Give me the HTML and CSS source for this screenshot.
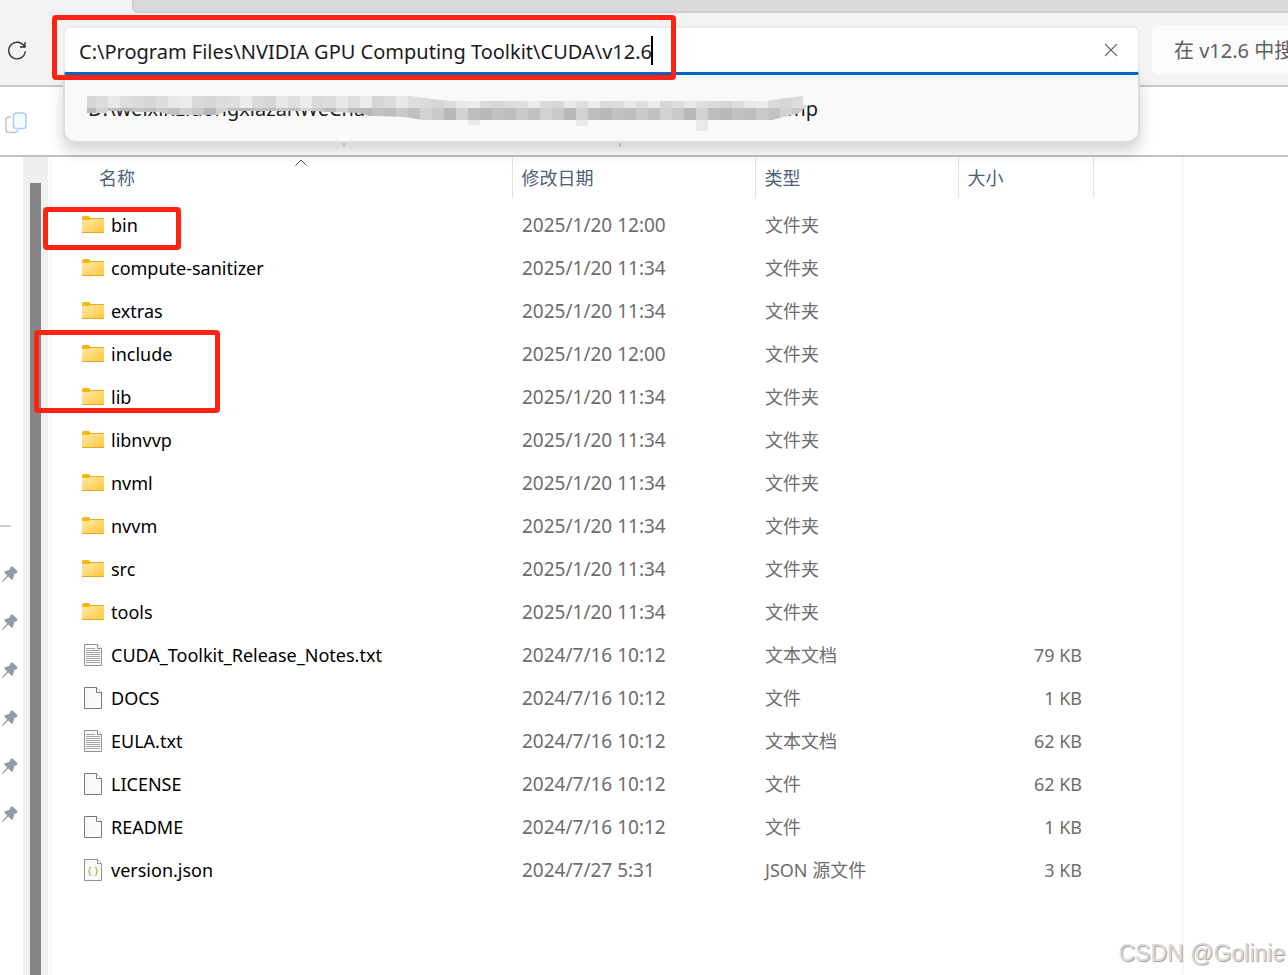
FILE: index.html
```
<!DOCTYPE html>
<html lang="zh-CN">
<head>
<meta charset="utf-8">
<title>v12.6</title>
<link rel="stylesheet" href="styles.css">
</head>
<body>
<svg class="defs" aria-hidden="true">
  <defs>
    <linearGradient id="fold" x1="0" y1="0" x2="1" y2="1"><stop offset="0" stop-color="#ffe8a6"/><stop offset="1" stop-color="#ffc83c"/></linearGradient>
    <symbol id="folder" viewBox="0 0 22 18"><path d="M0 1.5Q0 0 1.500 0H7L8.500 2H22V17H0Z" fill="#fbb615"/><path d="M0 4H7L8.500 3H22V17H0Z" fill="url(#fold)"/><path d="M8.500 2H22V3H8Z" fill="#e9ad27"/><path d="M0 16H22V17H0Z" fill="#e5a82c"/></symbol>
    <symbol id="doc" viewBox="0 0 18 22"><path d="M.5.5H12.500L17.500 5.500V21.500H.5Z" fill="#fafafa" stroke="#787878"/><path d="M12.500.5V5.500H17.500" fill="#fff" stroke="#787878"/></symbol>
    <symbol id="txt" viewBox="0 0 18 22"><path d="M.5.5H13.500L17.500 4.500V21.500H.5Z" fill="#fafafa" stroke="#929292"/><path d="M13.500.5V4.500H17.500" fill="#fff" stroke="#929292"/><path d="M2 4.500H11M2 6.500H16M2 8.500H16M2 10.500H16M2 12.500H16M2 14.500H16M2 16.500H16M2 18.500H16" stroke="#a5a5a5"/></symbol>
    <symbol id="json" viewBox="0 0 18 22"><path d="M.5.5H13.500L17.500 4.500V21.500H.5Z" fill="#fafafa" stroke="#929292"/><path d="M13.500.5V4.500H17.500" fill="#fff" stroke="#929292"/><path d="M7.500 8.500H6.500Q5.500 8.500 5.500 10V11.500L4.500 12.500L5.500 13.500V15Q5.500 16.500 6.500 16.500H7.500M10.500 8.500H11.500Q12.500 8.500 12.500 10V11.500L13.500 12.500L12.500 13.500V15Q12.500 16.500 11.500 16.500H10.500" fill="none" stroke="#bfb94e" stroke-width="1.200"/></symbol>
    <symbol id="pin" viewBox="0 0 16 16"><path d="M9 .8Q10 0 11 .7L15.200 5Q16 6 15 6.700L12.200 8.200L11 13Q10.500 14.300 9.500 13.500L6.200 10.500L1.500 15.500L.3 15.700L.5 14.500L5.300 9.700L2.500 6.700Q1.800 5.600 3 5.200L7.500 3.800Z" fill="#919ca4"/></symbol>
  </defs>
</svg>

<header class="top">
  <div class="tabs"><div class="tabstrip"></div></div>
  <div class="nav">
    <button class="icon-btn refresh" aria-label="刷新"><svg width="20" height="20" viewBox="0 0 20 20" fill="none" stroke="#333" stroke-width="1.400"><path d="M17.300 5.500A8.300 8.300 0 1 0 18.300 10.200M18 1V6H13"/></svg></button>
    <div class="address">
      <input class="path" aria-label="地址" value="C:\Program Files\NVIDIA GPU Computing Toolkit\CUDA\v12.6">
      <span class="caret"></span>
      <button class="icon-btn clear" aria-label="清除"><svg width="14" height="14" viewBox="0 0 14 14" stroke="#666" stroke-width="1.100"><path d="M1 1L13 13M13 1L1 13"/></svg></button>
      <div class="suggest">
        <span>D:\weixinzidongxiazai\WeChat</span><span>mp</span>
        <svg class="mosaic" width="740" height="36" viewBox="0 0 740 36" aria-hidden="true">
          <clipPath id="smear"><path d="M0 0H323L345 3L363 5H680L692 3L716 0V9H722L712 17L685 24H335L318 21L290 20H282L273 17L240 16L228 15H140L130 19H84L72 16H50L36 15H20V17H0Z"/></clipPath>
          <g id="mosaic" clip-path="url(#smear)"></g>
          <path d="M381 24H393V29H381ZM489 24H501V30H489ZM609 24H621V35H609Z" fill="#e9e9e9"/>
        </svg>
      </div>
      <div class="mark mark-path"></div>
    </div>
    <input class="search" aria-label="搜索" placeholder="在 v12.6 中搜索">
  </div>
</header>

<div class="toolbar">
  <button class="icon-btn copy" aria-label="复制"><svg width="22" height="22" viewBox="0 0 22 22" fill="none"><path d="M6 5H4Q1 5 1 8V17Q1 20.500 4 20.500H9Q12 20.500 13 18" stroke="#c4c4c4" stroke-width="1.500"/><rect x="8.500" y="1" width="12.500" height="15.500" rx="3" fill="#f6fbff" stroke="#a5cff0" stroke-width="1.500"/></svg></button>
  <span class="sep"></span><span class="sep"></span>
</div>

<div class="content">
  <nav class="side" aria-label="快速访问">
    <span class="rule"></span>
    <svg class="pin"><use href="#pin"/></svg><svg class="pin"><use href="#pin"/></svg><svg class="pin"><use href="#pin"/></svg><svg class="pin"><use href="#pin"/></svg><svg class="pin"><use href="#pin"/></svg><svg class="pin"><use href="#pin"/></svg>
  </nav>
  <div class="track"><div class="thumb"></div></div>
  <main class="files">
    <table>
      <colgroup><col class="c-name"><col class="c-date"><col class="c-type"><col class="c-size"></colgroup>
      <thead><tr>
        <th><button class="sort name">名称<svg class="chev" width="12" height="7" viewBox="0 0 12 7" fill="none" stroke="#555"><path d="M.5 6.500L6 1L11.500 6.500"/></svg></button></th>
        <th><button class="sort">修改日期</button></th><th><button class="sort">类型</button></th><th><button class="sort">大小</button></th>
      </tr></thead>
      <tbody id="rows"></tbody>
    </table>
    <div class="mark mark-bin"></div>
    <div class="mark mark-lib"></div>
  </main>
  <aside class="preview"></aside>
</div>
<div class="watermark">CSDN @Golinie</div>
<script src="app.js"></script>
</body>
</html>
```
FILE: styles.css
```
* { box-sizing: border-box; }
body {
  margin: 0;
  min-height: 100vh;
  display: flex;
  flex-direction: column;
  overflow: hidden;
  position: relative;
  background: #fff;
  color: #000;
  font: 18px/24px "Noto Sans", "Noto Sans CJK SC", sans-serif;
}
button, input { font: inherit; color: inherit; border: 0; background: none; padding: 0; outline: 0; }
svg { display: block; }
.defs { position: absolute; width: 0; height: 0; }
.top { background: #f3f3f3; border-bottom: 2px solid #c8c8c8; }
.tabs { padding-left: 132px; }
.tabstrip { height: 13px; background: #dadada; border: 2px solid #cdcdcd; border-width: 0 0 2px 2px; border-bottom-left-radius: 6px; }
.nav { display: flex; height: 72px; padding: 12px 0 10px 7px; }
.refresh { width: 22px; margin-right: 34px; padding-top: 1px; }
.address {
  position: relative;
  z-index: 3;
  flex: 1;
  display: flex;
  align-items: center;
  height: 49px;
  margin-top: 1px;
  padding: 0 22px 0 14px;
  background: #fff;
  border: 2px solid #ebebeb;
  border-bottom: 3px solid #0067c0;
  border-radius: 7px 7px 4px 4px;
}
.path { width: 572px; height: 30px; padding-top: 2px; font-size: 20px; color: #1b1b1b; }
.caret { width: 2px; height: 29px; background: #000; }
.clear { margin-left: auto; margin-right: -2px; }
.suggest {
  position: absolute;
  top: 100%;
  left: -2px;
  right: -2px;
  margin-top: 3px;
  height: 68px;
  display: flex;
  align-items: center;
  padding: 2px 320px 0 23px;
  justify-content: space-between;
  font-size: 20px;
  color: #1b1b1b;
  background: #f9f9f9;
  border: 2px solid #dcdcdc;
  border-top: 0;
  border-radius: 0 0 12px 12px;
  box-shadow: 0 8px 16px rgba(0, 0, 0, .18);
}
.mosaic { position: absolute; left: 22px; top: 21px; }
.search { width: 136px; height: 49px; margin-left: 12px; padding: 2px 0 0 22px; font-size: 20px; background: #fbfbfb; border-radius: 7px 0 0 7px; }
.search::placeholder { color: #606060; opacity: 1; }
.mark { position: absolute; z-index: 4; border: 5px solid #ff2314; border-radius: 4px; pointer-events: none; }
.mark-path { left: -13px; top: -13px; width: 624px; height: 65px; }
.toolbar { display: flex; align-items: center; height: 70px; padding-left: 5px; border-bottom: 2px solid #c1c1c1; }
.copy { padding-top: 4px; }
.sep { width: 2px; height: 36px; margin: 16px 0 0 316px; background: #d8d8d8; }
.sep + .sep { margin-left: 274px; }
.content { flex: 1; display: flex; }
.side { width: 23px; }
.rule { display: block; height: 2px; width: 11px; margin: 368px 0 39px; background: #d0d0d0; }
.pin { width: 16px; height: 16px; margin: 0 0 32px 2px; }
.track { width: 25px; padding: 26px 7px 0; background: #efefef; display: flex; }
.thumb { flex: 1; background: #858585; }
.files { position: relative; flex: 1; margin-left: 2px; border: 2px solid #f7f7f7; border-width: 0 2px; }
.preview { width: 104px; }
table { table-layout: fixed; width: 1041px; border-collapse: collapse; }
.c-name { width: 460px; }
.c-date { width: 243px; }
.c-type { width: 203px; }
.c-size { width: 135px; }
th { height: 41px; padding: 0; border-right: 1px solid #e2e2e2; font-weight: 400; color: #4c607a; }
.sort { display: block; width: 100%; height: 40px; padding-left: 9px; text-align: left; }
.name { position: relative; width: auto; min-width: 421px; margin-left: 38px; }
.chev { position: absolute; top: 1px; left: 50%; margin-left: -6px; }
tbody::before { content: ""; display: block; height: 5px; }
td { height: 43px; padding: 0 0 0 10px; color: #6d6d6d; }
td:first-child { padding-left: 30px; color: #000; }
td:nth-child(2) { font-size: 19px; }
td:last-child { padding: 0 11px 0 0; text-align: right; }
.file { display: flex; align-items: center; gap: 7px; }
.ico { width: 22px; height: 22px; }
.mark-bin { left: -9px; top: 50px; width: 138px; height: 43px; }
.mark-lib { left: -18px; top: 173px; width: 186px; height: 83px; }
.watermark { position: absolute; right: 3px; bottom: 7px; font: 23px/30px "Liberation Sans", sans-serif; color: #dcdcdc; text-shadow: 1px 1px 1px #999; }
```
FILE: app.js
```
const files = [
  ["folder", "bin", "2025/1/20 12:00", "文件夹", ""],
  ["folder", "compute-sanitizer", "2025/1/20 11:34", "文件夹", ""],
  ["folder", "extras", "2025/1/20 11:34", "文件夹", ""],
  ["folder", "include", "2025/1/20 12:00", "文件夹", ""],
  ["folder", "lib", "2025/1/20 11:34", "文件夹", ""],
  ["folder", "libnvvp", "2025/1/20 11:34", "文件夹", ""],
  ["folder", "nvml", "2025/1/20 11:34", "文件夹", ""],
  ["folder", "nvvm", "2025/1/20 11:34", "文件夹", ""],
  ["folder", "src", "2025/1/20 11:34", "文件夹", ""],
  ["folder", "tools", "2025/1/20 11:34", "文件夹", ""],
  ["txt", "CUDA_Toolkit_Release_Notes.txt", "2024/7/16 10:12", "文本文档", "79 KB"],
  ["doc", "DOCS", "2024/7/16 10:12", "文件", "1 KB"],
  ["txt", "EULA.txt", "2024/7/16 10:12", "文本文档", "62 KB"],
  ["doc", "LICENSE", "2024/7/16 10:12", "文件", "62 KB"],
  ["doc", "README", "2024/7/16 10:12", "文件", "1 KB"],
  ["json", "version.json", "2024/7/27 5:31", "JSON 源文件", "3 KB"]
];
document.getElementById("rows").innerHTML = files.map(([icon, name, date, type, size]) =>
  `<tr><td><span class="file"><svg class="ico"><use href="#${icon}"/></svg>${name}</span></td><td>${date}</td><td>${type}</td><td>${size}</td></tr>`).join("");

// Pixelated strip over the private part of the suggested path
const upper = ["#d6d6d6", "#dcdcdc", "#e8e8e8", "#dedede", "#ececec", "#dadada"];
const lower = ["#b8b8b8", "#c9c9c9", "#bdbdbd", "#d2d2d2", "#c1c1c1"];
let cells = "";
for (let i = 0; i < 61; i++) {
  const x = i * 12 - 3;
  cells += `<rect x="${x}" y="0" width="12" height="12" fill="${upper[(i * 7 + (i >> 2)) % 6]}"/>`;
  cells += `<rect x="${x}" y="12" width="12" height="12" fill="${lower[(i * 3 + (i >> 1)) % 5]}"/>`;
}
document.getElementById("mosaic").innerHTML = cells;
```
